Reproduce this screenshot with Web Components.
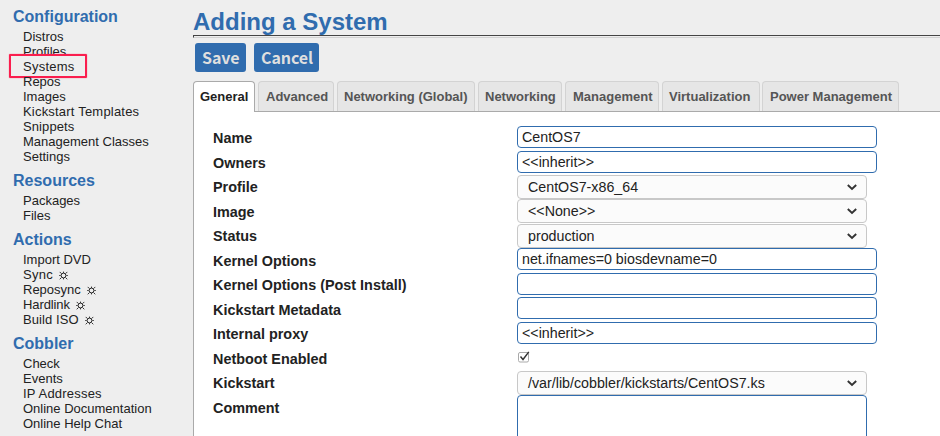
<!DOCTYPE html>
<html lang="en">
<head>
<meta charset="utf-8">
<title>Adding a System</title>
<style>
html,body{margin:0;height:100%;overflow:hidden;background:#eee;font-family:"Liberation Sans",Arial,sans-serif;color:#222}
</style>
</head>
<body>
<system-page></system-page>
<script>
const define = (name, html, setup) => customElements.define(name, class extends HTMLElement {
  connectedCallback() {
    if (this.shadowRoot) return;
    const root = this.attachShadow({ mode: 'open' });
    root.innerHTML = html;
    if (setup) setup(this, root);
  }
});

define('menu-section', `<style>
:host{display:block;padding-bottom:8px}
h2{margin:0 0 3px;font:bold 16px/18px "Liberation Sans",Arial,sans-serif;color:#306cae}
ul{list-style:none;margin:0;padding:0 0 0 10px}
</style><h2></h2><ul><slot></slot></ul>`, (el, r) => { r.querySelector('h2').textContent = el.getAttribute('heading'); });

define('menu-item', `<style>
:host{display:block;position:relative;font-size:13px;line-height:15px;height:15px;white-space:nowrap;color:#222}
:host([marked])::after{content:"";position:absolute;left:-14px;top:-5px;width:74px;height:20px;border:2px solid #fa1e4e;border-radius:1px;box-shadow:0 0 1px #fa1e4e}
svg{width:9px;height:9px;margin-left:6px;vertical-align:-1px;display:none}
:host([task]) svg{display:inline}
</style><slot></slot><svg viewBox="0 0 9 9" fill="none" stroke="#222"><circle cx="4.500" cy="4.500" r="2.400" stroke-width="1"/><path d="M4.500.6v1.400M4.500 7v1.400M.7.9l1.700 1.700M6.600 6.600l1.700 1.700M8.300.9L6.600 2.600M2.400 6.600L.7 8.300M.2 4.500h1.400M7.400 4.500h1.400" stroke-width=".9"/></svg>`);

define('push-button', `<style>
:host{display:block}
button{display:block;box-sizing:border-box;height:29px;margin:0;border:0;border-radius:3px;padding:0 7px;background:#306cae;color:#dfdfdf;font:bold 16px/29px "Noto Sans CJK SC","Noto Sans",sans-serif;letter-spacing:-.1px;text-align:left;width:var(--w)}
</style><button><slot></slot></button>`);

define('page-tab', `<style>
:host{display:block;box-sizing:border-box;height:30px;border:1px solid #d3d3d3;border-bottom:0;border-radius:4px 4px 0 0;background:#e6e6e6;color:#555;padding-left:var(--pad,7px);width:var(--w);font:bold 13px/30px "Liberation Sans",Arial,sans-serif;white-space:nowrap}
:host([active]){height:31px;border-color:#aaa;background:#fff;color:#212121}
</style><slot></slot>`);

define('form-row', `<style>
:host{display:grid;grid-template-columns:304px 1fr;height:var(--h,24px)}
label{font:bold 14.4px/17px "Liberation Sans",Arial,sans-serif;color:#222;padding-top:var(--drop,4px)}
</style><label></label><div><slot></slot></div>`, (el, r) => { r.querySelector('label').textContent = el.getAttribute('label'); });

define('text-field', `<style>
:host{display:block;box-sizing:border-box;width:360px;height:22px;border:1px solid #306cae;border-radius:4px;background:#fff;padding-left:4px;font-size:14.25px;line-height:20px;white-space:nowrap}
:host([area]){width:350px;height:90px}
</style><slot></slot>`);

define('select-field', `<style>
:host{display:flex;box-sizing:border-box;width:350px;height:24px;border:1px solid #c8c8c8;border-radius:4px;background:#fbfbfb;padding:0 9px 0 10px;font-size:14.25px;line-height:22px;white-space:nowrap;justify-content:space-between;align-items:flex-start}
svg{width:10px;height:7px;margin-top:8px}
</style><span><slot></slot></span><svg viewBox="0 0 10 7"><path d="M.8 1L5 5l4.200-4" fill="none" stroke="#333" stroke-width="1.9"/></svg>`);

define('check-field', `<style>
:host{display:block;padding:5px 0 0 1px}
svg{display:block;width:12px;height:12px}
</style><svg viewBox="0 0 12 12" fill="none"><rect x=".5" y="1.500" width="10" height="9.500" rx="1.500" fill="#fff" stroke="#aaa"/><path d="M2.500 5.500L5 8.500L10.800.8" stroke="#333" stroke-width="1.400"/></svg>`);

define('system-page', `<style>
:host{display:grid;grid-template-columns:193px 1fr;height:436px;overflow:hidden}
nav{padding:8px 0 0 13px}
main{display:flex;flex-direction:column;min-width:0}
h1{margin:0;height:35px;box-sizing:border-box;padding-top:8px;font:bold 24px/27px "Liberation Sans",Arial,sans-serif;color:#306cae}
hr{box-sizing:border-box;width:100%;height:3px;margin:0;border:solid;border-width:1px 0 1px 1px;border-color:#444 #444 #d2d2d2}
.actions{display:flex;gap:8px;padding:5px 0 9px 2px}
.tabs{display:flex;height:31px;gap:3px;box-shadow:inset 0 -1px #aaa}
.tabs page-tab:last-child{margin-left:-1px}
.panel{flex:1;background:#fff;border-left:1px solid #aaa;padding:14px 0 0 19px}
</style>
<nav>
<menu-section heading="Configuration"><menu-item>Distros</menu-item><menu-item>Profiles</menu-item><menu-item marked style="letter-spacing:.25px">Systems</menu-item><menu-item>Repos</menu-item><menu-item>Images</menu-item><menu-item style="letter-spacing:.2px">Kickstart Templates</menu-item><menu-item style="letter-spacing:.1px">Snippets</menu-item><menu-item>Management Classes</menu-item><menu-item>Settings</menu-item></menu-section>
<menu-section heading="Resources"><menu-item>Packages</menu-item><menu-item>Files</menu-item></menu-section>
<menu-section heading="Actions"><menu-item>Import DVD</menu-item><menu-item task style="letter-spacing:.25px">Sync</menu-item><menu-item task>Reposync</menu-item><menu-item task style="letter-spacing:-.1px">Hardlink</menu-item><menu-item task style="letter-spacing:.1px">Build ISO</menu-item></menu-section>
<menu-section heading="Cobbler"><menu-item>Check</menu-item><menu-item>Events</menu-item><menu-item style="letter-spacing:.2px">IP Addresses</menu-item><menu-item>Online Documentation</menu-item><menu-item>Online Help Chat</menu-item></menu-section>
</nav>
<main>
<h1>Adding a System</h1><hr>
<div class="actions"><push-button style="--w:51px">Save</push-button><push-button style="--w:65px">Cancel</push-button></div>
<div class="tabs"><page-tab active style="--w:62px;--pad:6px">General</page-tab><page-tab style="--w:76px">Advanced</page-tab><page-tab style="--w:138px;--pad:6px">Networking (Global)</page-tab><page-tab style="--w:84px;--pad:6px">Networking</page-tab><page-tab style="--w:94px">Management</page-tab><page-tab style="--w:98px;--pad:6px">Virtualization</page-tab><page-tab style="--w:137px;--pad:7px">Power Management</page-tab></div>
<div class="panel">
<form-row label="Name" style="--h:25px"><text-field>CentOS7</text-field></form-row>
<form-row label="Owners"><text-field>&lt;&lt;inherit&gt;&gt;</text-field></form-row>
<form-row label="Profile"><select-field>CentOS7-x86_64</select-field></form-row>
<form-row label="Image" style="--h:25px;--drop:5px"><select-field>&lt;&lt;None&gt;&gt;</select-field></form-row>
<form-row label="Status"><select-field>production</select-field></form-row>
<form-row label="Kernel Options" style="--h:25px;--drop:5px"><text-field>net.ifnames=0 biosdevname=0</text-field></form-row>
<form-row label="Kernel Options (Post Install)"><text-field></text-field></form-row>
<form-row label="Kickstart Metadata" style="--h:25px;--drop:5px"><text-field></text-field></form-row>
<form-row label="Internal proxy"><text-field>&lt;&lt;inherit&gt;&gt;</text-field></form-row>
<form-row label="Netboot Enabled" style="--h:25px;--drop:5px"><check-field></check-field></form-row>
<form-row label="Kickstart"><select-field>/var/lib/cobbler/kickstarts/CentOS7.ks</select-field></form-row>
<form-row label="Comment" style="--h:60px;--drop:5px"><text-field area></text-field></form-row>
</div>
</main>`);
</script>
</body>
</html>
